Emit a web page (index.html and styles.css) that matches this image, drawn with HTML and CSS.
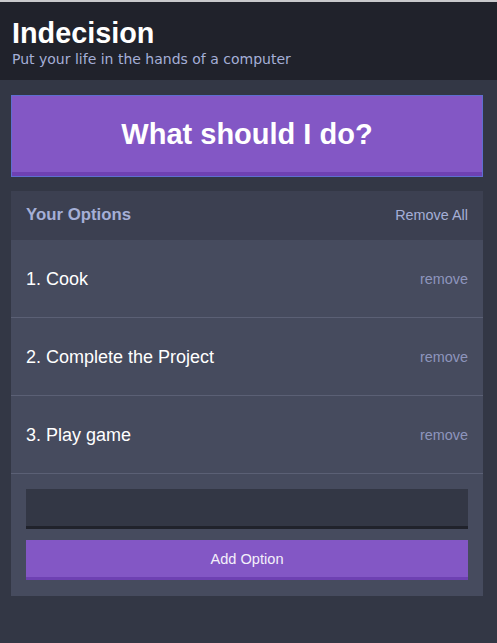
FILE: index.html
```html
<!DOCTYPE html>
<html>
<head>
<meta charset="utf-8">
<link rel="stylesheet" href="styles.css">
</head>
<body>
<div class="topline"></div>
<header class="header">
  <h1 class="title">Indecision</h1>
  <h2 class="subtitle">Put your life in the hands of a computer</h2>
</header>
<main class="container">
  <button class="big-button">What should I do?</button>
  <section class="widget">
    <div class="widget-header">
      <h3 class="widget-title">Your Options</h3>
      <button class="link-button">Remove All</button>
    </div>
    <div class="option">
      <p class="option-text">1. Cook</p>
      <button class="link-button small">remove</button>
    </div>
    <div class="option">
      <p class="option-text">2. Complete the Project</p>
      <button class="link-button small">remove</button>
    </div>
    <div class="option">
      <p class="option-text">3. Play game</p>
      <button class="link-button small">remove</button>
    </div>
    <form class="add-option">
      <input class="add-input" type="text">
      <button class="add-button" type="button">Add Option</button>
    </form>
  </section>
</main>
</body>
</html>
```

FILE: styles.css
```css
* { box-sizing: border-box; }
html, body { margin: 0; padding: 0; }
body {
  background: #333745;
  font-family: "Liberation Sans", Arial, sans-serif;
  width: 497px;
  height: 643px;
  overflow: hidden;
}
.topline {
  height: 2px;
  background: #c9c9cc;
}
.header {
  background: #20222b;
  height: 78px;
  padding: 16px 12px 0;
}
.title {
  margin: 0;
  color: #ffffff;
  font-size: 28.8px;
  font-weight: bold;
  line-height: 31px;
}
.subtitle {
  margin: 2px 0 0;
  color: #a5afd7;
  font-family: "DejaVu Sans", Verdana, sans-serif;
  font-weight: normal;
  font-size: 14px;
  line-height: 16px;
}
.container {
  padding: 15px 0 0 11px;
  width: 483px;
}
.big-button {
  display: block;
  width: 472px;
  height: 82px;
  background: #8357c5;
  border: 1px solid #5e6ed0;
  box-shadow: inset 0 -4px 0 #6e41b2;
  color: #ffffff;
  font-family: "Liberation Sans", Arial, sans-serif;
  font-weight: bold;
  font-size: 29px;
  padding: 0 0 4px;
  margin: 0 0 14px;
}
.widget {
  background: #464b5e;
  width: 472px;
}
.widget-header {
  background: #3c4051;
  height: 49px;
  display: flex;
  align-items: center;
  justify-content: space-between;
  padding: 0 15px 1px;
}
.widget-title {
  margin: 0;
  color: #a5afd7;
  font-size: 16.8px;
  font-weight: bold;
}
.link-button {
  background: none;
  border: none;
  padding: 0;
  color: #a5afd7;
  font-family: "Liberation Sans", Arial, sans-serif;
  font-size: 14.4px;
}
.link-button.small {
  color: #8e95bd;
}
.option {
  height: 78px;
  display: flex;
  align-items: center;
  justify-content: space-between;
  padding: 1px 15px 0;
  border-bottom: 1px solid #5b6075;
}
.option-text {
  margin: 0;
  color: #ffffff;
  font-size: 18px;
}
.add-option {
  padding: 15px 15px 16px;
  display: flex;
  flex-direction: column;
  gap: 11px;
  margin: 0;
}
.add-input {
  display: block;
  width: 442px;
  height: 40px;
  background: #333745;
  border: none;
  border-bottom: 3px solid #20222b;
  margin: 0;
  color: #a5afd7;
}
.add-button {
  display: block;
  width: 442px;
  height: 40px;
  background: #8357c5;
  border: none;
  border-bottom: 3px solid #6e41b2;
  color: #f4f0fa;
  font-family: "Liberation Sans", Arial, sans-serif;
  font-size: 14.6px;
  padding: 0;
}
```
